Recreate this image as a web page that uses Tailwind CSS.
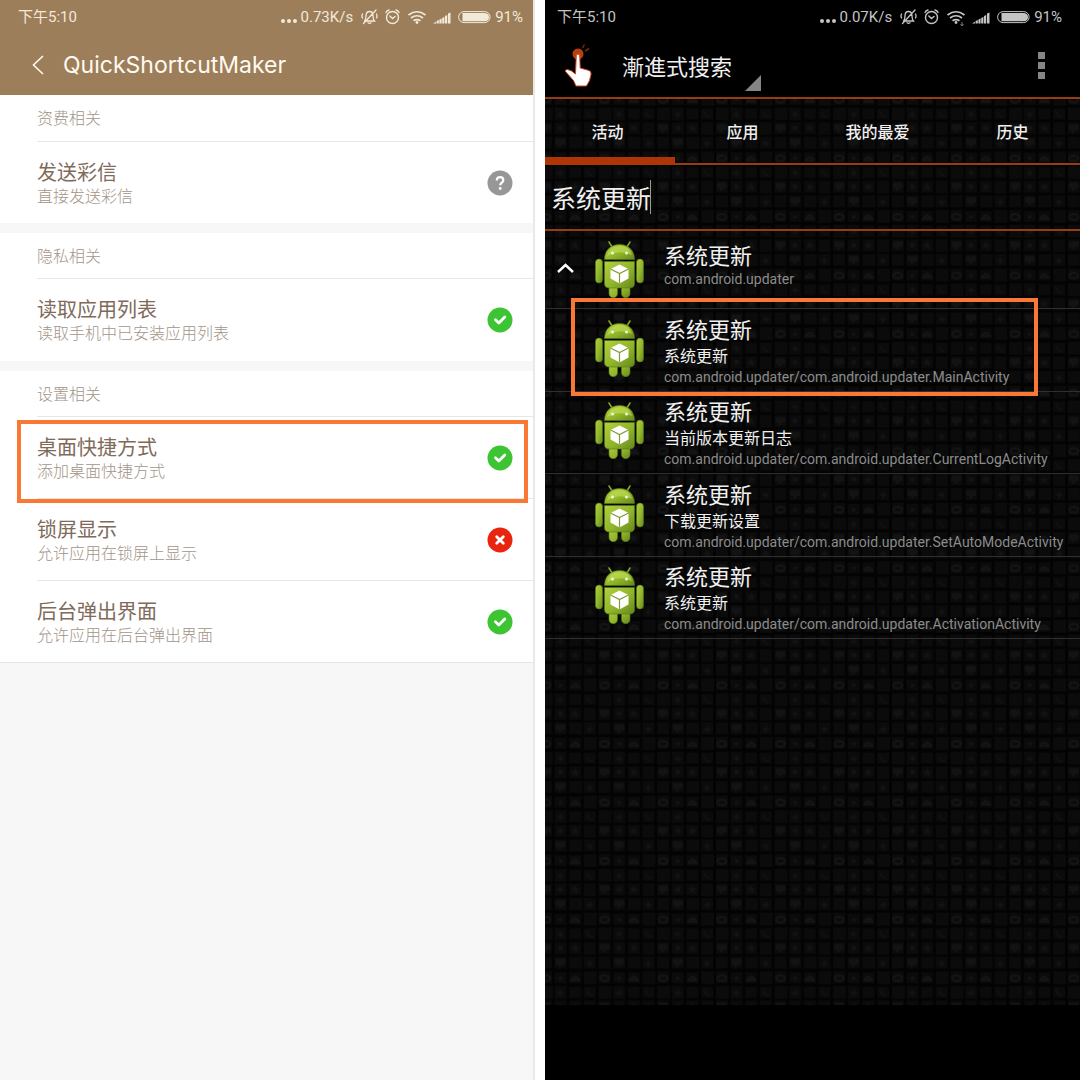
<!DOCTYPE html>
<html lang="zh-CN">
<head>
    <meta charset="UTF-8">
    <meta name="viewport" content="width=device-width, initial-scale=1.0">
    <title>QuickShortcutMaker</title>
    <script src="https://cdn.jsdelivr.net/npm/@tailwindcss/browser@4"></script>
</head>
<body class="bg-white font-['Roboto','Noto_Sans_CJK_SC',sans-serif]">
    <!-- Shared drawings -->
    <svg class="absolute size-0" aria-hidden="true">
        <symbol id="status-icons" viewBox="0 0 130 20">
            <!-- muted bell -->
            <g fill="none" stroke="currentColor" stroke-width="1.300" stroke-linecap="round">
                <path d="M3.500 14h10c-1.300-1.500-1.500-2.500-1.500-5C12 6 10.500 4.500 8.500 4.500S5 6 5 9c0 2.500-.2 3.500-1.500 5M7 15.800q1.500 1 3 0M15 3L2.500 16.500M1.500 7q-1 2 0 4M15.500 7q1 2 0 4"/>
            </g>
            <!-- alarm -->
            <g fill="none" stroke="currentColor" stroke-width="1.400" stroke-linecap="round">
                <circle cx="31.500" cy="10.500" r="6"/>
                <path d="M28.800 9l2.700 2.500L34 9.500M25 5.500q.8-2 3-2.500M38 5.500q-.8-2-3-2.500"/>
            </g>
            <!-- wifi -->
            <g fill="none" stroke="currentColor" stroke-width="1.700">
                <path d="M47.500 8q8.500-6.500 17 0M50 11q6-4.500 12 0M52.500 13.800q3.500-2.500 7 0"/>
            </g>
            <circle cx="56" cy="15.500" r="1.400" fill="currentColor"/>
            <!-- signal -->
            <path fill="currentColor" d="M72 16.500l3-1.800v1.800zM75.600 16.500v-2.500l2.200-1v3.500zM78.400 16.500v-4l2.200-1v5zM81.200 16.500v-5.500l2.200-1v6.500zM84 16.500V9l2.200-1v8.500zM87 16.500V6.500l2.500-1v11z"/>
            <!-- battery -->
            <rect x="97.600" y="4.600" width="31.500" height="11" rx="5.500" fill="none" stroke="currentColor" stroke-width="1"/>
            <path fill="currentColor" d="M101.500 6H124q4 .5 4 4.200T124 14.300H101.500z"/>
        </symbol>
        <linearGradient id="droid-body" x1="0" x2="1" y1="0" y2="1">
            <stop offset="0" stop-color="#b2d13c"/>
            <stop offset=".55" stop-color="#8fb52a"/>
            <stop offset="1" stop-color="#66881c"/>
        </linearGradient>
        <symbol id="droid" viewBox="0 0 49 57">
            <path d="M14 1l5 8M35 1l-5 8" stroke="#86a92b" stroke-width="1.500" stroke-linecap="round"/>
            <g fill="url(#droid-body)" stroke="#58761a" stroke-width=".6">
                <path d="M14 42h8.500v10.500a4.200 4.200 0 0 1-8.500 0zM26.500 42H35v10.500a4.200 4.200 0 0 1-8.500 0z"/>
                <rect x=".5" y="18" width="7" height="24" rx="3.500"/>
                <rect x="41.500" y="18" width="7" height="24" rx="3.500"/>
                <path d="M9.500 20.500h30v22q0 4.500-5 4.500h-20q-5 0-5-4.500z"/>
                <path d="M9.500 18.500C9.500 9 16 3.500 24.500 3.500S39.500 9 39.500 18.500z"/>
            </g>
            <path d="M12 15.500Q14.500 5 24.500 5T37 14q-12-6-25 1.500z" fill="#c9e35d" opacity=".55"/>
            <circle cx="17.500" cy="12" r="1.500" fill="#f2f7d8"/>
            <circle cx="31.500" cy="12" r="1.500" fill="#f2f7d8"/>
            <path d="M24.500 23.500l9 4.500v9.500l-9 5-9-5V28z" fill="#fff"/>
            <path d="M15.500 28l9 4.500 9-4.500M24.500 32.500v10" fill="none" stroke="#7f9c38" stroke-width="1.200"/>
        </symbol>
        <symbol id="granted" viewBox="0 0 26 26">
            <circle cx="13" cy="13" r="12.500" fill="#3cc433"/>
            <path d="M8.500 12.800l3.300 3.200 6-6" fill="none" stroke="#fff" stroke-width="2.800" stroke-linecap="round" stroke-linejoin="round"/>
        </symbol>
    </svg>

    <div class="grid min-h-screen grid-cols-2 gap-[10px]">
        <!-- Permission settings -->
        <section class="flex flex-col border-r-2 border-[#e9e9e9] bg-[#f7f7f7]">
            <header class="bg-[#9d7e5b] text-[#fffaf0]">
                <div class="flex h-[34px] items-center pl-[18px] pr-[10px] text-[15px] text-[#f3e9d9]">
                    <span>下午5:10</span>
                    <span class="ml-auto mr-1 flex gap-[2px] pt-2"><i class="size-1 rounded-full bg-current"></i><i class="size-1 rounded-full bg-current"></i><i class="size-1 rounded-full bg-current"></i></span>
                    <span>0.73K/s</span>
                    <svg class="ml-2 mr-1 h-5 w-[130px]"><use href="#status-icons"/></svg>
                    <span>91%</span>
                </div>
                <div class="flex h-[61px] items-center pl-[30px]">
                    <button type="button" aria-label="返回" class="w-[33px]">
                        <svg class="h-6 w-4" viewBox="0 0 16 24" fill="none" stroke="currentColor" stroke-width="1.600"><path d="M13 3L3.500 12l9.500 9"/></svg>
                    </button>
                    <h1 class="pt-[2px] font-['Inter',sans-serif] text-[23px]">QuickShortcutMaker</h1>
                </div>
            </header>

            <div class="mb-[10px] bg-white pl-[37px]">
                <h2 class="h-[47px] border-b border-[#e6e6e6] pt-3 text-base leading-6 font-light text-[#a39488]">资费相关</h2>
                <div class="flex h-[81px] items-center justify-between pr-5">
                    <div>
                        <p class="text-xl leading-7 text-[#806a5a]">发送彩信</p>
                        <p class="text-base leading-5 font-light text-[#a39488]">直接发送彩信</p>
                    </div>
                    <svg class="size-[26px]" viewBox="0 0 26 26" role="img" aria-label="询问">
                        <circle cx="13" cy="13" r="12.500" fill="#979797"/>
                        <path d="M9.800 10.500c0-2 1.400-3.300 3.300-3.300s3.200 1.200 3.200 3c0 2.400-3.100 2.400-3.100 5" fill="none" stroke="#fff" stroke-width="2.200"/>
                        <circle cx="13.200" cy="18.500" r="1.400" fill="#fff"/>
                    </svg>
                </div>
            </div>

            <div class="mb-[10px] bg-white pl-[37px]">
                <h2 class="h-[46px] border-b border-[#e6e6e6] pt-3 text-base leading-6 font-light text-[#a39488]">隐私相关</h2>
                <div class="flex h-[82px] items-center justify-between pr-5">
                    <div>
                        <p class="text-xl leading-7 text-[#806a5a]">读取应用列表</p>
                        <p class="text-base leading-5 font-light text-[#a39488]">读取手机中已安装应用列表</p>
                    </div>
                    <svg class="size-[26px]" role="img" aria-label="允许"><use href="#granted"/></svg>
                </div>
            </div>

            <div class="border-b border-[#e6e6e6] bg-white pl-[37px]">
                <h2 class="h-[46px] border-b border-[#e6e6e6] pt-3 text-base leading-6 font-light text-[#a39488]">设置相关</h2>
                <div class="relative flex h-[82px] items-center justify-between border-b border-[#e6e6e6] pr-5">
                    <div>
                        <p class="text-xl leading-7 text-[#806a5a]">桌面快捷方式</p>
                        <p class="text-base leading-5 font-light text-[#a39488]">添加桌面快捷方式</p>
                    </div>
                    <svg class="size-[26px]" role="img" aria-label="允许"><use href="#granted"/></svg>
                    <span class="absolute top-[3px] right-[5px] -bottom-[5px] -left-5 border-4 border-[#f97833]"></span>
                </div>
                <div class="flex h-[82px] items-center justify-between border-b border-[#e6e6e6] pr-5">
                    <div>
                        <p class="text-xl leading-7 text-[#806a5a]">锁屏显示</p>
                        <p class="text-base leading-5 font-light text-[#a39488]">允许应用在锁屏上显示</p>
                    </div>
                    <svg class="size-[26px]" viewBox="0 0 26 26" role="img" aria-label="拒绝">
                        <circle cx="13" cy="13" r="12.500" fill="#ea250f"/>
                        <path d="M9.700 9.700l6.600 6.600M16.300 9.700l-6.600 6.600" stroke="#fff" stroke-width="2.800" stroke-linecap="round"/>
                    </svg>
                </div>
                <div class="flex h-[81px] items-center justify-between pr-5">
                    <div>
                        <p class="text-xl leading-7 text-[#806a5a]">后台弹出界面</p>
                        <p class="text-base leading-5 font-light text-[#a39488]">允许应用在后台弹出界面</p>
                    </div>
                    <svg class="size-[26px]" role="img" aria-label="允许"><use href="#granted"/></svg>
                </div>
            </div>
        </section>

        <!-- Activity search -->
        <section class="flex flex-col bg-black text-[#f0f0f0]">
            <header class="border-b-2 border-[#963d14]">
                <div class="flex h-[34px] items-center pl-3 pr-[18px] text-[15px] text-[#c4c4c4]">
                    <span>下午5:10</span>
                    <span class="ml-auto mr-1 flex gap-[2px] pt-2"><i class="size-1 rounded-full bg-current"></i><i class="size-1 rounded-full bg-current"></i><i class="size-1 rounded-full bg-current"></i></span>
                    <span>0.07K/s</span>
                    <svg class="ml-2 mr-1 h-5 w-[130px]" viewBox="0 0 130 20">
                        <use href="#status-icons"/>
                        <path d="M62 15v4M60.500 17l1.500 2 1.500-2" fill="none" stroke="#777"/>
                    </svg>
                    <span>91%</span>
                </div>
                <div class="flex h-[63px] items-center pl-[19px]">
                    <svg class="h-[46px] w-[31px]" viewBox="0 0 30 46" aria-hidden="true">
                        <circle cx="13.500" cy="11" r="5.500" fill="#b8400f"/>
                        <path d="M18 5l2-3.500M20.500 8l4-2.500" stroke="#6e2c12" stroke-width="1.500"/>
                        <path d="M11.800 12q1.700-2 3.400 0l.5 13 8.800 2.500q2.500 1 2 4L25 37.500 22 43H11.500L9 37.500l-8-9q-.5-2 2-2l4 1.500 4 3z" fill="#fff" stroke="#d2451a" stroke-width="1" stroke-linejoin="round"/>
                    </svg>
                    <div class="relative ml-[27px] flex h-full items-center pr-7">
                        <select aria-label="搜索方式" class="appearance-none bg-transparent text-[22px] font-['Noto_Sans_CJK_TC',sans-serif] outline-none">
                            <option>漸進式搜索</option>
                        </select>
                        <svg class="pointer-events-none absolute right-0 bottom-[6px] size-4" viewBox="0 0 16 16" fill="#858585"><path d="M16 0v16H0z"/></svg>
                    </div>
                    <button type="button" aria-label="更多" class="ml-auto mr-[35px] flex flex-col gap-[3px] text-[#858585]">
                        <i class="size-[7px] bg-current"></i><i class="size-[7px] bg-current"></i><i class="size-[7px] bg-current"></i>
                    </button>
                </div>
            </header>

            <main class="relative h-[906px] bg-[#030303]">
                <!-- tiled wallpaper -->
                <svg class="absolute inset-0 size-full" aria-hidden="true">
                    <pattern id="tiles" x="-6" y="-7" width="58.660" height="58.560" patternUnits="userSpaceOnUse" viewBox="0 0 60 60">
                        <g fill="#0b0b0b">
                            <rect x="1" y="1" width="12" height="12"/><rect x="16" y="2" width="12" height="11"/><rect x="31" y="2" width="12" height="11"/><rect x="46" y="1" width="13" height="13"/>
                            <rect x="1" y="16" width="13" height="13"/><rect x="16" y="16" width="12" height="13"/><rect x="31" y="17" width="12" height="11"/><rect x="46" y="17" width="12" height="11"/>
                            <rect x="1" y="31" width="12" height="12"/><rect x="16" y="31" width="12" height="12"/><rect x="31" y="31" width="12" height="12"/><rect x="46" y="31" width="12" height="13"/>
                            <rect x="1" y="46" width="12" height="12"/><rect x="16" y="46" width="12" height="12"/><rect x="31" y="46" width="13" height="12"/><rect x="46" y="46" width="12" height="12"/>
                        </g>
                        <g fill="none" stroke="#151515" stroke-width="2">
                            <ellipse cx="7" cy="8" rx="4.500" ry="3"/>
                            <path d="M33 10q4-7 8 0z"/>
                            <path d="M49 20q1 5 6 6" stroke="#101010"/>
                        </g>
                        <g fill="#131313">
                            <rect x="2" y="33" width="10" height="6" rx="2"/><path d="M4 39h5l-3 3zM37 33l1.500 3h3l-2.500 2 1 3-3-2-3 2 1-3-2.500-2h3z"/>
                            <rect x="17" y="48" width="10" height="6" rx="1"/><path d="M20 54h4l-3 3z"/><circle cx="22" cy="8" r="2"/><path d="M21 20h2v2h2v2h-2v2h-2v-2h-2v-2h2zM51 50h2v2h2v2h-2v2h-2v-2h-2v-2h2z"/><circle cx="22" cy="37" r="2.500"/>
                        </g>
                    </pattern>
                    <rect width="100%" height="100%" fill="url(#tiles)"/>
                </svg>

                <div class="relative">
                    <nav class="grid h-[66px] grid-cols-[130fr_135fr_135fr_135fr] border-b-2 border-[#963d14] text-base font-medium">
                        <button type="button" class="-mb-[2px] border-b-8 border-[#ae3604] pr-[5px] pt-[10px]">活动</button>
                        <button type="button" class="pt-1">应用</button>
                        <button type="button" class="pt-1">我的最爱</button>
                        <button type="button" class="pt-1">历史</button>
                    </nav>
                    <div class="flex h-[66px] items-center border-b-2 border-[#963d14] pl-[6px]">
                        <input type="text" aria-label="搜索" value="系统更新" class="field-sizing-content bg-transparent pt-[6px] text-[25px] outline-none">
                        <span class="-ml-px h-[34px] w-px bg-[#999]"></span>
                    </div>

                    <div class="flex h-[78px] items-center border-b border-[#2f2f2f]">
                        <button type="button" aria-label="收起" class="w-[50px] pb-1 pl-3">
                            <svg class="h-4 w-[18px]" viewBox="0 0 18 16" fill="none" stroke="#fff" stroke-width="2.400"><path d="M1 12l7.500-7 7.500 7"/></svg>
                        </button>
                        <svg class="h-[57px] w-[49px]"><use href="#droid"/></svg>
                        <div class="ml-5 pb-[10px]">
                            <p class="text-[22px] leading-7">系统更新</p>
                            <p class="text-[14px] leading-4 text-[#8c8c8c]">com.android.updater</p>
                        </div>
                    </div>
                    <ul class="relative grid h-[330px] grid-rows-4">
                        <li class="flex items-center border-b border-[#2f2f2f] pl-[50px]">
                            <svg class="mb-[3px] h-[57px] w-[49px]"><use href="#droid"/></svg>
                            <div class="ml-5 pt-[2px]">
                                <p class="text-[22px] leading-7">系统更新</p>
                                <p class="text-base leading-6">系统更新</p>
                                <p class="text-[14px] leading-4 text-[#8c8c8c]">com.android.updater/com.android.updater.MainActivity</p>
                            </div>
                            <span class="absolute -top-[11px] right-[42px] left-[26px] h-[98px] border-4 border-[#f97833]"></span>
                        </li>
                        <li class="flex items-center border-b border-[#2f2f2f] pl-[50px]">
                            <svg class="mb-[3px] h-[57px] w-[49px]"><use href="#droid"/></svg>
                            <div class="ml-5 pt-[2px]">
                                <p class="text-[22px] leading-7">系统更新</p>
                                <p class="text-base leading-6">当前版本更新日志</p>
                                <p class="text-[14px] leading-4 text-[#8c8c8c]">com.android.updater/com.android.updater.CurrentLogActivity</p>
                            </div>
                        </li>
                        <li class="flex items-center border-b border-[#2f2f2f] pl-[50px]">
                            <svg class="mb-[3px] h-[57px] w-[49px]"><use href="#droid"/></svg>
                            <div class="ml-5 pt-[2px]">
                                <p class="text-[22px] leading-7">系统更新</p>
                                <p class="text-base leading-6">下载更新设置</p>
                                <p class="text-[14px] leading-4 text-[#8c8c8c]">com.android.updater/com.android.updater.SetAutoModeActivity</p>
                            </div>
                        </li>
                        <li class="flex items-center border-b border-[#2f2f2f] pl-[50px]">
                            <svg class="mb-[3px] h-[57px] w-[49px]"><use href="#droid"/></svg>
                            <div class="ml-5 pt-[2px]">
                                <p class="text-[22px] leading-7">系统更新</p>
                                <p class="text-base leading-6">系统更新</p>
                                <p class="text-[14px] leading-4 text-[#8c8c8c]">com.android.updater/com.android.updater.ActivationActivity</p>
                            </div>
                        </li>
                    </ul>
                </div>
            </main>
        </section>
    </div>
</body>
</html>
